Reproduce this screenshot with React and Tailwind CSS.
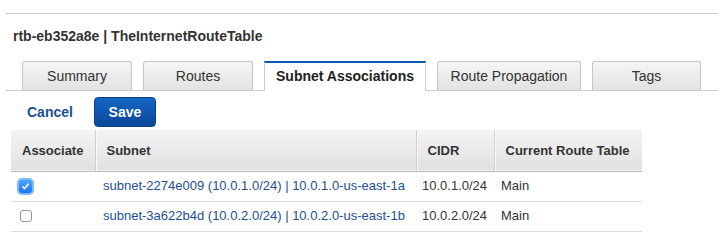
import React from "react";

const tabs = [
  { label: "Summary", w: "w-[110px]" },
  { label: "Routes", w: "w-[110px]" },
  { label: "Subnet Associations", w: "w-[162px]", active: true },
  { label: "Route Propagation", w: "w-[144px]" },
  { label: "Tags", w: "w-[109px]" },
];

const rows = [
  { id: "subnet-2274e009 (10.0.1.0/24) | 10.0.1.0-us-east-1a", cidr: "10.0.1.0/24", checked: true },
  { id: "subnet-3a622b4d (10.0.2.0/24) | 10.0.2.0-us-east-1b", cidr: "10.0.2.0/24", checked: false },
];

const Check = ({ checked }) =>
  checked ? (
    <span className="flex h-[17px] w-[17px] items-center justify-center rounded-[5px] bg-[#7fb9f5] ml-[6px]">
      <span className="flex h-[13px] w-[13px] items-center justify-center rounded-[3px] bg-gradient-to-b from-[#4aa3ff] to-[#1877f2]">
        <svg width="9" height="9" viewBox="0 0 9 9">
          <path d="M1.8 4.8 L3.6 6.6 L7.2 2.2" fill="none" stroke="white" strokeWidth="1.6" strokeLinecap="round" strokeLinejoin="round" />
        </svg>
      </span>
    </span>
  ) : (
    <span className="ml-[9px] block h-[12px] w-[12px] rounded-[3px] border border-[#999] bg-white" />
  );

export default function App() {
  return (
    <div className="h-[249px] w-[718px] overflow-hidden bg-white font-['Liberation_Sans',Arial,sans-serif] text-[#333]">
      <div className="ml-[6px] mt-[13px] border-t border-[#cccccc]">
        <h1 className="pl-[7px] pt-[13px] text-[14px] font-bold leading-[18px] text-[#333]">
          rtb-eb352a8e | TheInternetRouteTable
        </h1>

        <div className="mt-[16px] flex h-[30px] items-end gap-[11px] border-b border-[#cccccc] pl-4">
          {tabs.map((t) =>
            t.active ? (
              <div
                key={t.label}
                className={`${t.w} -mb-px flex h-[30px] items-center justify-center border-x border-t-2 border-x-[#cccccc] border-t-[#0a56b0] bg-white pb-[1px] text-[14px] font-bold text-[#222]`}
              >
                {t.label}
              </div>
            ) : (
              <div
                key={t.label}
                className={`${t.w} flex h-[29px] items-center justify-center rounded-t-[3px] border border-b-0 border-[#c6c6c6] bg-gradient-to-b from-[#f6f6f6] to-[#e2e2e2] text-[14px] text-[#333]`}
              >
                {t.label}
              </div>
            )
          )}
        </div>

        <div className="flex h-[36px] items-start pl-[21px] pt-[6px]">
          <button className="mt-[7px] text-[14px] font-bold leading-[16px] text-[#1d4f91]">Cancel</button>
          <button className="ml-[21px] h-[30px] w-[62px] rounded-[4px] border border-[#083f86] bg-gradient-to-b from-[#1566c4] to-[#0a4799] text-[14px] font-bold text-white">
            Save
          </button>
        </div>
      </div>

      <table className="mt-[3px] ml-[11px] w-[631px] table-fixed border-collapse text-[13px]">
        <colgroup>
          <col className="w-[84px]" />
          <col className="w-[321px]" />
          <col className="w-[78px]" />
          <col className="w-[148px]" />
        </colgroup>
        <thead>
          <tr className="bg-gradient-to-b from-[#f4f4f4] to-[#e1e1e1] border-b border-[#b9b9b9]">
            {["Associate", "Subnet", "CIDR", "Current Route Table"].map((h, i) => (
              <th
                key={h}
                className={`h-[41px] px-[11px] text-left font-bold text-[#333] ${i > 0 ? "border-l border-[#cfcfcf] shadow-[inset_1px_0_0_#fafafa]" : ""}`}
              >
                {h}
              </th>
            ))}
          </tr>
        </thead>
        <tbody>
          {rows.map((r) => (
            <tr key={r.id} className="border-b border-[#dddddd]">
              <td className="h-[30px] align-middle">
                <Check checked={r.checked} />
              </td>
              <td className="h-[30px] pl-[8px] text-[#1d4f91]">{r.id}</td>
              <td className="h-[30px] pl-[6px] text-[#333]">{r.cidr}</td>
              <td className="h-[30px] pl-[7px] text-[#333]">Main</td>
            </tr>
          ))}
        </tbody>
      </table>
    </div>
  );
}
